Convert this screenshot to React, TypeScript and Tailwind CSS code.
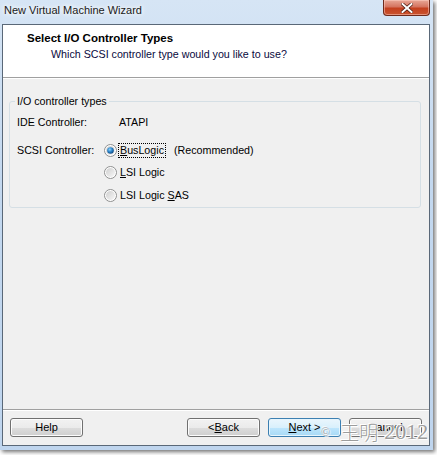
import React from "react";

const Radio = ({ checked }: { checked?: boolean }) => (
  <svg width="13" height="13" viewBox="0 0 13 13" className="shrink-0">
    <defs>
      <linearGradient id="rbg" x1="0" y1="0" x2="1" y2="1">
        <stop offset="0" stopColor="#cfcfcf" />
        <stop offset="1" stopColor="#f7f7f7" />
      </linearGradient>
      <radialGradient id="rdot" cx="0.4" cy="0.35" r="0.7">
        <stop offset="0" stopColor="#8fd3ff" />
        <stop offset="0.5" stopColor="#2d86c9" />
        <stop offset="1" stopColor="#0b3f78" />
      </radialGradient>
    </defs>
    <circle cx="6.5" cy="6.5" r="6" fill="#ffffff" stroke="#8e8f8f" strokeWidth="1" />
    <circle cx="6.5" cy="6.5" r="4.5" fill="url(#rbg)" />
    {checked && <circle cx="6.5" cy="6.5" r="3.3" fill="url(#rdot)" />}
  </svg>
);

const Btn = ({ children, primary }: { children: React.ReactNode; primary?: boolean }) => (
  <div
    className={
      "w-[73px] h-[19px] rounded-[3px] border flex items-center justify-center text-[11px] leading-none text-black " +
      (primary
        ? "border-[#3c7fb1] bg-[linear-gradient(#eaf6fd_0%,#d9f0fc_50%,#bee6fd_51%,#a7d9f5_100%)] shadow-[inset_0_0_0_1px_#e6f5fd]"
        : "border-[#707070] bg-[linear-gradient(#f2f2f2_0%,#ebebeb_50%,#dddddd_51%,#cfcfcf_100%)] shadow-[inset_0_0_0_1px_#fcfcfc]")
    }
  >
    {children}
  </div>
);

export default function App() {
  return (
    <div className="w-[437px] h-[455px] bg-white overflow-hidden font-['Liberation_Sans',Arial,sans-serif]">
      <div className="relative w-[433px] h-[450px] flex flex-col bg-[linear-gradient(to_bottom,#d6e5f5,#c3d8ef_40%,#bfd5ee)] shadow-[2px_2px_4px_rgba(0,0,0,0.55)]">
        {/* title bar */}
        <div className="h-[24px] flex items-start justify-between">
          <div className="pl-[4px] pt-[3px] text-[11px] leading-[15px] text-[#1a1a1a] [text-shadow:0_0_6px_#ffffff,0_0_4px_#ffffff]">
            New Virtual Machine Wizard
          </div>
          <div className="mr-[3px] w-[47px] h-[16px] rounded-b-[4px] border border-t-0 border-[#6e2a1c] bg-[linear-gradient(to_bottom,#e8a897_0%,#d57460_45%,#c4401f_55%,#c9542f_100%)] flex items-center justify-center shadow-[inset_0_0_0_1px_rgba(255,210,200,0.5)]">
            <svg width="12" height="10" viewBox="0 0 12 10">
              <path d="M1.5 1 L10.5 9 M10.5 1 L1.5 9" stroke="#4a1a10" strokeWidth="3.4" strokeLinecap="square" />
              <path d="M1.5 1 L10.5 9 M10.5 1 L1.5 9" stroke="#ffffff" strokeWidth="2" strokeLinecap="square" />
            </svg>
          </div>
        </div>
        {/* client area */}
        <div className="ml-[2px] w-[428px] h-[422px] border border-[#5a6878] flex flex-col bg-[#f0f0f0]">
          {/* header */}
          <div className="h-[53px] bg-white border-b border-[#a0a0a0] text-[10.7px] text-black">
            <div className="pl-[24px] pt-[7px] font-bold leading-[13px] text-[11.5px]">Select I/O Controller Types</div>
            <div className="pl-[48px] pt-[3px] leading-[13px] text-[#0a0a40]">Which SCSI controller type would you like to use?</div>
          </div>
          {/* body */}
          <div className="flex-1 border-t border-white px-[6px] pr-[8px] pt-[16px] text-[10.7px] text-black">
            <fieldset className="border border-[#d5dfe5] rounded-[3px] px-[7px] pb-[2px]">
              <legend className="ml-[-2px] px-[2px] leading-[13px]">I/O controller types</legend>
              <div className="pt-[4px] flex flex-col">
                <div className="h-[20px] flex items-center">
                  <div className="w-[102px]">IDE Controller:</div>
                  <div>ATAPI</div>
                </div>
                <div className="h-[20px] mt-[8px] flex items-center">
                  <div className="w-[87px]">SCSI Controller:</div>
                  <Radio checked />
                  <div className="ml-[1px] px-[1px] h-[15px] flex items-center border border-dotted border-black">
                    <span><span className="underline">B</span>usLogic</span>
                  </div>
                  <div className="ml-[8px]">(Recommended)</div>
                </div>
                <div className="h-[20px] mt-[2px] pl-[87px] flex items-center">
                  <Radio />
                  <div className="ml-[3px]"><span className="underline">L</span>SI Logic</div>
                </div>
                <div className="h-[20px] mt-[3px] pl-[87px] flex items-center">
                  <Radio />
                  <div className="ml-[3px]">LSI Logic <span className="underline">S</span>AS</div>
                </div>
              </div>
            </fieldset>
          </div>
          {/* footer */}
          <div className="h-[36px] border-t border-[#a0a0a0]">
            <div className="h-full border-t border-white flex items-start pt-[7px] px-[7px]">
              <Btn>Help</Btn>
              <div className="flex-1" />
              <div className="flex gap-[8px]">
                <Btn>&lt; <span className="underline">B</span>ack</Btn>
                <Btn primary><span className="underline">N</span>ext &gt;</Btn>
                <Btn>Cancel</Btn>
              </div>
            </div>
          </div>
        </div>
        {/* watermark */}
        <div className="absolute left-[321px] top-[421px] flex items-end text-[#9c9c9c] [text-shadow:0_0_1px_#ffffff,1px_1px_0_#ffffff,-1px_-1px_0_#ffffff] whitespace-nowrap">
          <span className="text-[12px] leading-[14px] mb-[4px] font-['Liberation_Serif',serif]">©</span>
          <span className="ml-[10px] text-[19px] leading-[22px] font-['Noto_Sans_CJK_SC',sans-serif] font-light">王明</span>
          <span className="ml-[6px] text-[22px] leading-[22px] font-['Liberation_Serif',serif]">2012</span>
        </div>
      </div>
    </div>
  );
}
